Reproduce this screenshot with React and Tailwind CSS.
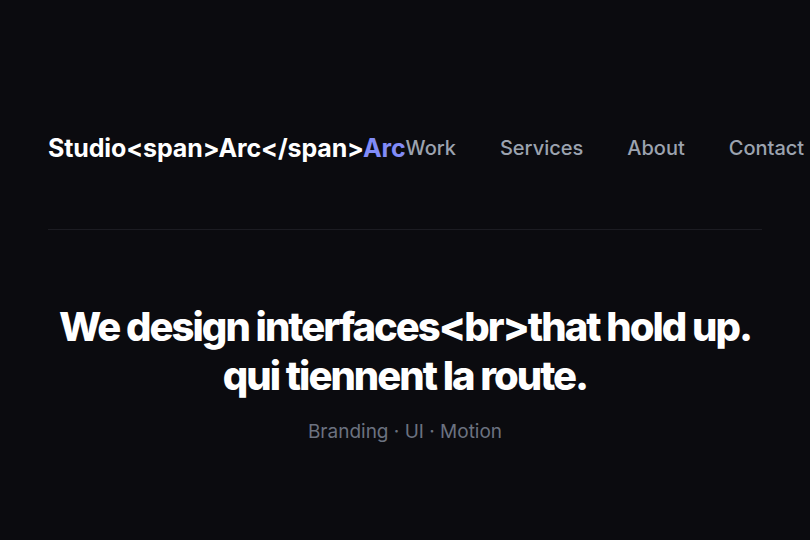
export default function App() {
  return (
    <div className="min-h-[540px] w-full overflow-hidden bg-[#0b0b0f] text-white" style={{ fontFamily: "Inter, 'Noto Sans', sans-serif" }}>
      <div className="mx-12 border-b border-[#1c1c22] pt-[130px] pb-[63px]">
        <header className="flex items-center justify-between whitespace-nowrap">
          <div className="text-[25px] font-bold tracking-[-0.005em] leading-[36px]">
            Studio&lt;span&gt;Arc&lt;/span&gt;<span className="text-[#818cf8]">Arc</span>
          </div>
          <nav className="flex gap-[44px] text-[20px] font-medium text-[#9ca3af]">
            <a>Work</a>
            <a>Services</a>
            <a>About</a>
            <a>Contact</a>
          </nav>
        </header>
      </div>
      <section className="flex flex-col items-center pt-[72px] text-center">
        <h1 className="text-[40px] font-extrabold leading-[49px] tracking-[-0.05em]">
          We design interfaces&lt;br&gt;that hold up.
          <br />
          qui tiennent la route.
        </h1>
        <p className="mt-[18px] text-[19px] text-[#6b7280]">Branding · UI · Motion</p>
      </section>
    </div>
  );
}
